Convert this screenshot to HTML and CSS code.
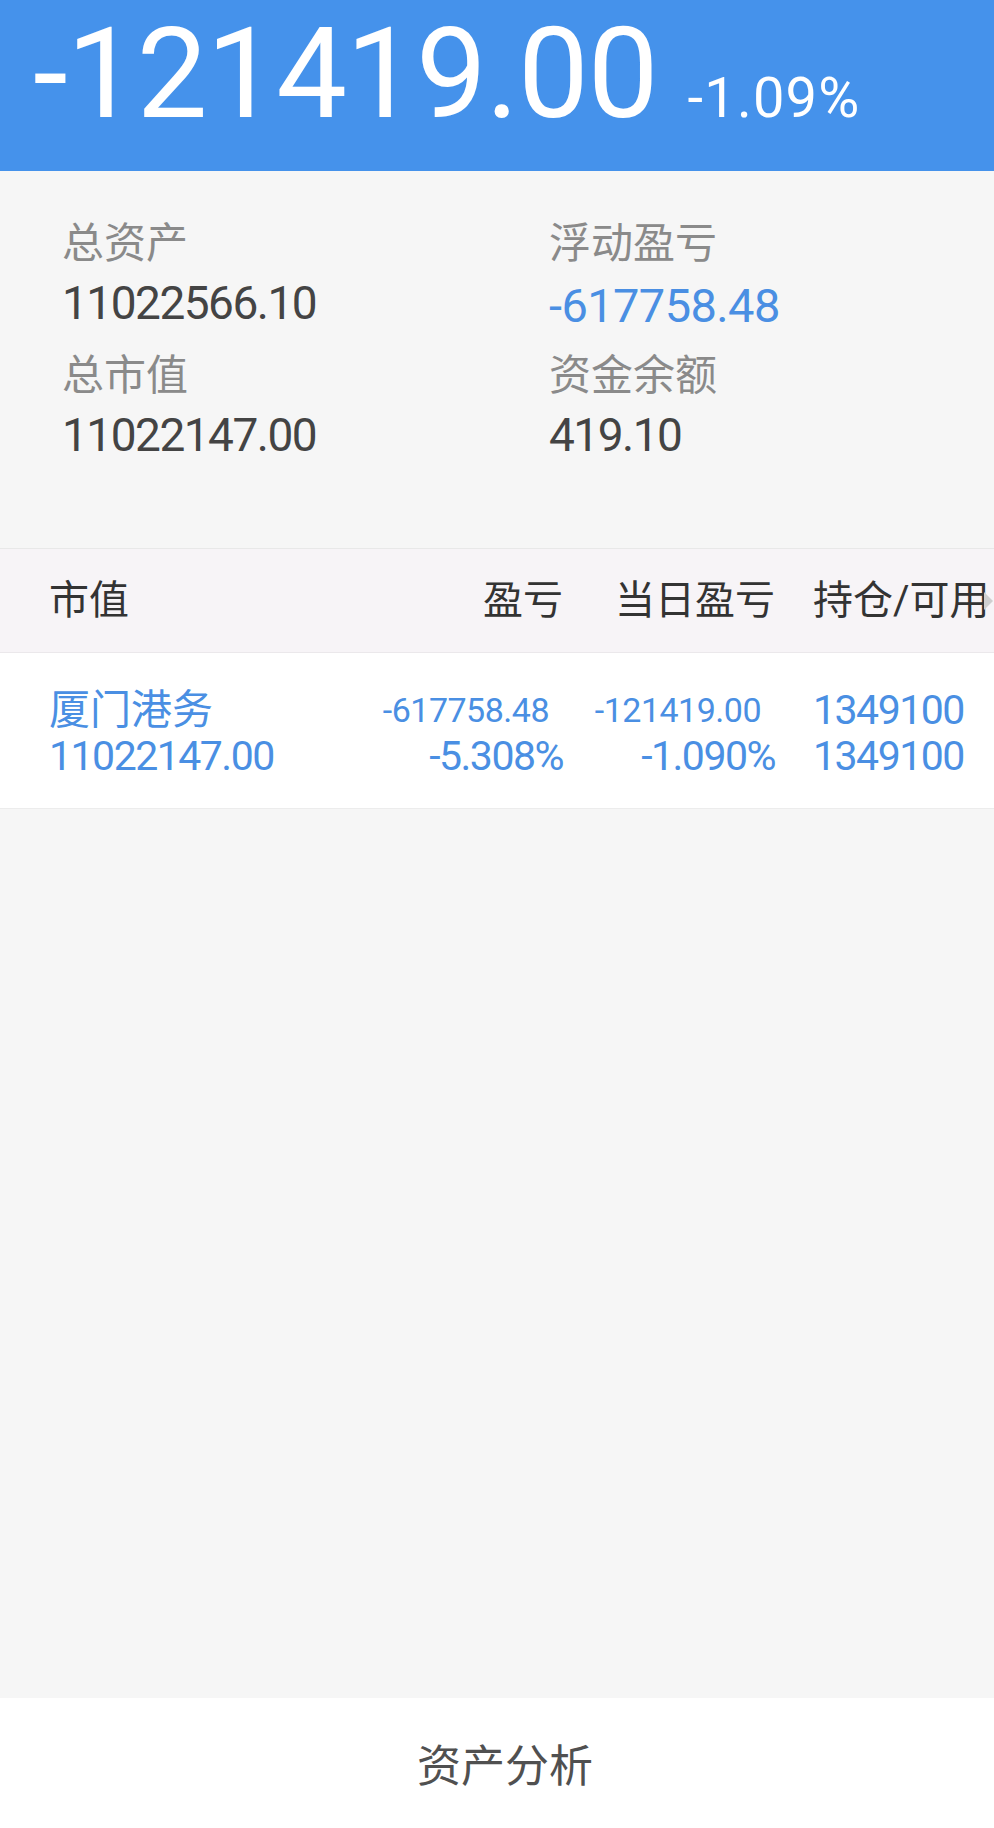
FILE: index.html
```html
<!DOCTYPE html>
<html lang="zh-CN">
<head>
    <meta charset="UTF-8">
    <meta name="viewport" content="width=device-width, initial-scale=1.0">
    <title>持仓</title>
    <link rel="stylesheet" href="styles.css">
</head>
<body>
    <div class="page">
        <!-- 当日盈亏 -->
        <div class="top">
            <span class="today">-121419.00</span>
            <span class="today-pct">-1.09%</span>
        </div>

        <!-- 资产汇总 -->
        <div class="summary">
            <div class="cell">
                <div class="label">总资产</div>
                <div class="value">11022566.10</div>
            </div>
            <div class="cell">
                <div class="label">浮动盈亏</div>
                <div class="value blue">-617758.48</div>
            </div>
            <div class="cell">
                <div class="label">总市值</div>
                <div class="value">11022147.00</div>
            </div>
            <div class="cell">
                <div class="label">资金余额</div>
                <div class="value">419.10</div>
            </div>
        </div>

        <!-- 持仓列表 -->
        <div class="table-head">
            <div class="col col-name">市值</div>
            <div class="col col-right">盈亏</div>
            <div class="col col-right">当日盈亏</div>
            <div class="col col-pos">持仓/可用</div>
            <span class="more-arrow"></span>
        </div>

        <div class="table-row">
            <div class="col col-name">
                <div class="line name">厦门港务</div>
                <div class="line">11022147.00</div>
            </div>
            <div class="col col-right">
                <div class="line small">-617758.48</div>
                <div class="line">-5.308%</div>
            </div>
            <div class="col col-right">
                <div class="line small">-121419.00</div>
                <div class="line">-1.090%</div>
            </div>
            <div class="col col-pos">
                <div class="line">1349100</div>
                <div class="line">1349100</div>
            </div>
        </div>

        <div class="empty"></div>

        <div class="bottom-bar">资产分析</div>
    </div>
</body>
</html>
```

FILE: styles.css
```css
/* 持仓页面 */
body {
    margin: 0;
    padding: 0;
    font-family: Roboto, "Noto Sans CJK SC", sans-serif;
    background-color: #f6f6f6;
}

.page {
    display: flex;
    flex-direction: column;
    min-height: 1828px;
}

.top {
    display: flex;
    align-items: baseline;
    height: 171px;
    padding-left: 33px;
    box-sizing: border-box;
    background-color: #4592eb;
    color: white;
}

.today {
    font-size: 126px;
    letter-spacing: -1px;
}

.today-pct {
    margin-left: 30px;
    font-size: 56px;
    letter-spacing: 1.2px;
}

.summary {
    display: grid;
    grid-template-columns: 487px 1fr;
    row-gap: 13px;
    padding: 45px 0 81px 62px;
    background-color: #f6f6f6;
    border-bottom: 1px solid #e8e8e8;
}

.label {
    font-size: 42px;
    line-height: 56px;
    color: #8a8a8a;
}

.value {
    font-size: 46px;
    line-height: 63px;
    letter-spacing: -1.5px;
    color: #444;
}

.value.blue {
    font-size: 47px;
    letter-spacing: -0.6px;
    color: #4a8fe3;
    transform: translateY(2px);
}

.table-head,
.table-row {
    display: grid;
    grid-template-columns: 331px 183px 212px 1fr;
    padding-left: 49px;
    white-space: nowrap;
}

.table-head {
    position: relative;
    align-items: center;
    height: 103px;
    font-size: 40px;
    line-height: 48px;
    color: #333;
    background-color: #f7f4f7;
    border-bottom: 1px solid #ebe8eb;
}

.table-row {
    padding-top: 34px;
    padding-bottom: 29px;
    background-color: white;
    color: #4a8fe3;
    border-bottom: 1px solid #ececec;
}

.col-right {
    text-align: right;
}

.col-pos {
    padding-left: 38px;
}

.line {
    font-size: 41px;
    line-height: 46px;
    letter-spacing: -1.5px;
}

.line.name {
    letter-spacing: 0;
}

.line.small {
    padding-right: 14px;
    font-size: 34px;
    letter-spacing: -0.5px;
}

.more-arrow {
    position: absolute;
    right: 1px;
    top: 43px;
    width: 0;
    height: 0;
    border-top: 9px solid transparent;
    border-bottom: 9px solid transparent;
    border-left: 9px solid #cfcfcf;
}

.empty {
    flex: 1;
}

.bottom-bar {
    height: 130px;
    padding-left: 16px;
    display: flex;
    align-items: center;
    justify-content: center;
    background-color: white;
    font-family: "Noto Sans CJK SC", sans-serif;
    font-size: 44px;
    color: #505050;
}
```
